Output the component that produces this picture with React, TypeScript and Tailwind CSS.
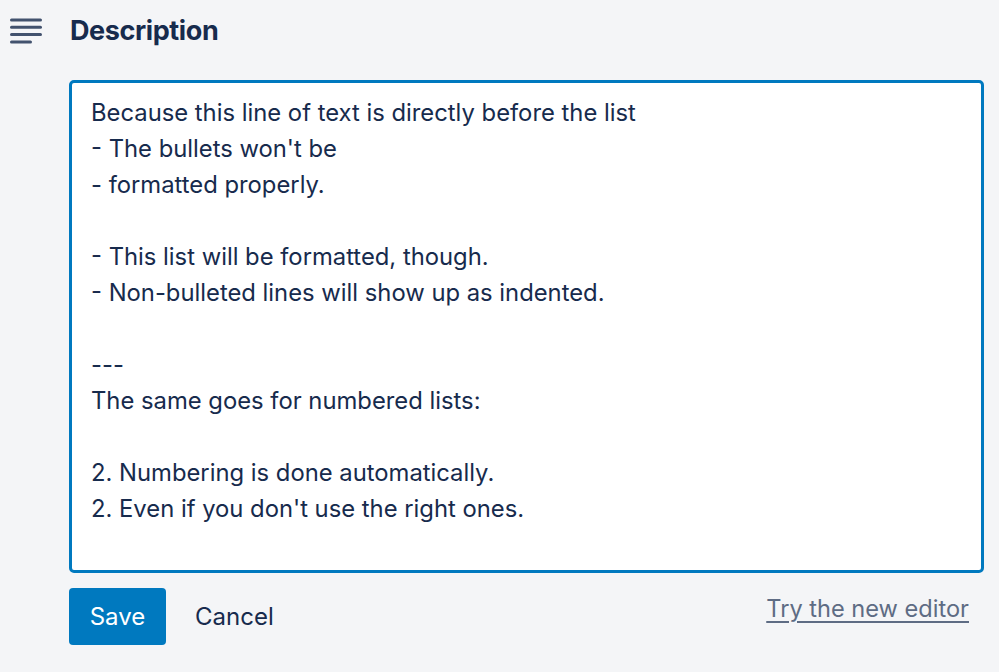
import React from "react";

const text = `Because this line of text is directly before the list
- The bullets won't be
- formatted properly.

- This list will be formatted, though.
- Non-bulleted lines will show up as indented.

---
The same goes for numbered lists:

2. Numbering is done automatically.
2. Even if you don't use the right ones.`;

export default function App() {
  return (
    <div
      className="w-[999px] h-[672px] bg-[#f4f5f7] text-[#172b4d] overflow-hidden"
      style={{ fontFamily: "Inter, 'Noto Sans', sans-serif" }}
    >
      <div className="flex items-center h-[62px] pl-[10px]">
        <svg width="32" height="26" viewBox="0 0 32 26" className="text-[#42526e]">
          <g stroke="currentColor" strokeWidth="3" strokeLinecap="round">
            <line x1="1.5" y1="2" x2="30.5" y2="2" />
            <line x1="1.5" y1="9.3" x2="30.5" y2="9.3" />
            <line x1="1.5" y1="16.6" x2="30.5" y2="16.6" />
            <line x1="1.5" y1="23.9" x2="20.5" y2="23.9" />
          </g>
        </svg>
        <h1 className="ml-[28px] text-[27px] font-bold tracking-[-0.4px]">Description</h1>
      </div>
      <div className="ml-[69px] mr-[15px] mt-[18px]">
        <div className="h-[493px] bg-white border-[3px] border-[#0079bf] rounded-[5px] pl-[19px] pt-[12px] text-[23.8px] leading-[36px] whitespace-pre-wrap">
          {text}
        </div>
        <div className="flex items-center mt-[15px]">
          <button className="w-[97px] h-[57px] bg-[#0079bf] text-white rounded-[4px] text-[24px]">
            Save
          </button>
          <span className="ml-[29px] text-[24px]">Cancel</span>
          <a className="ml-auto mr-[15px] text-[23.6px] text-[#5e6c84] underline underline-offset-[4px] mt-[-16px]">
            Try the new editor
          </a>
        </div>
      </div>
    </div>
  );
}
